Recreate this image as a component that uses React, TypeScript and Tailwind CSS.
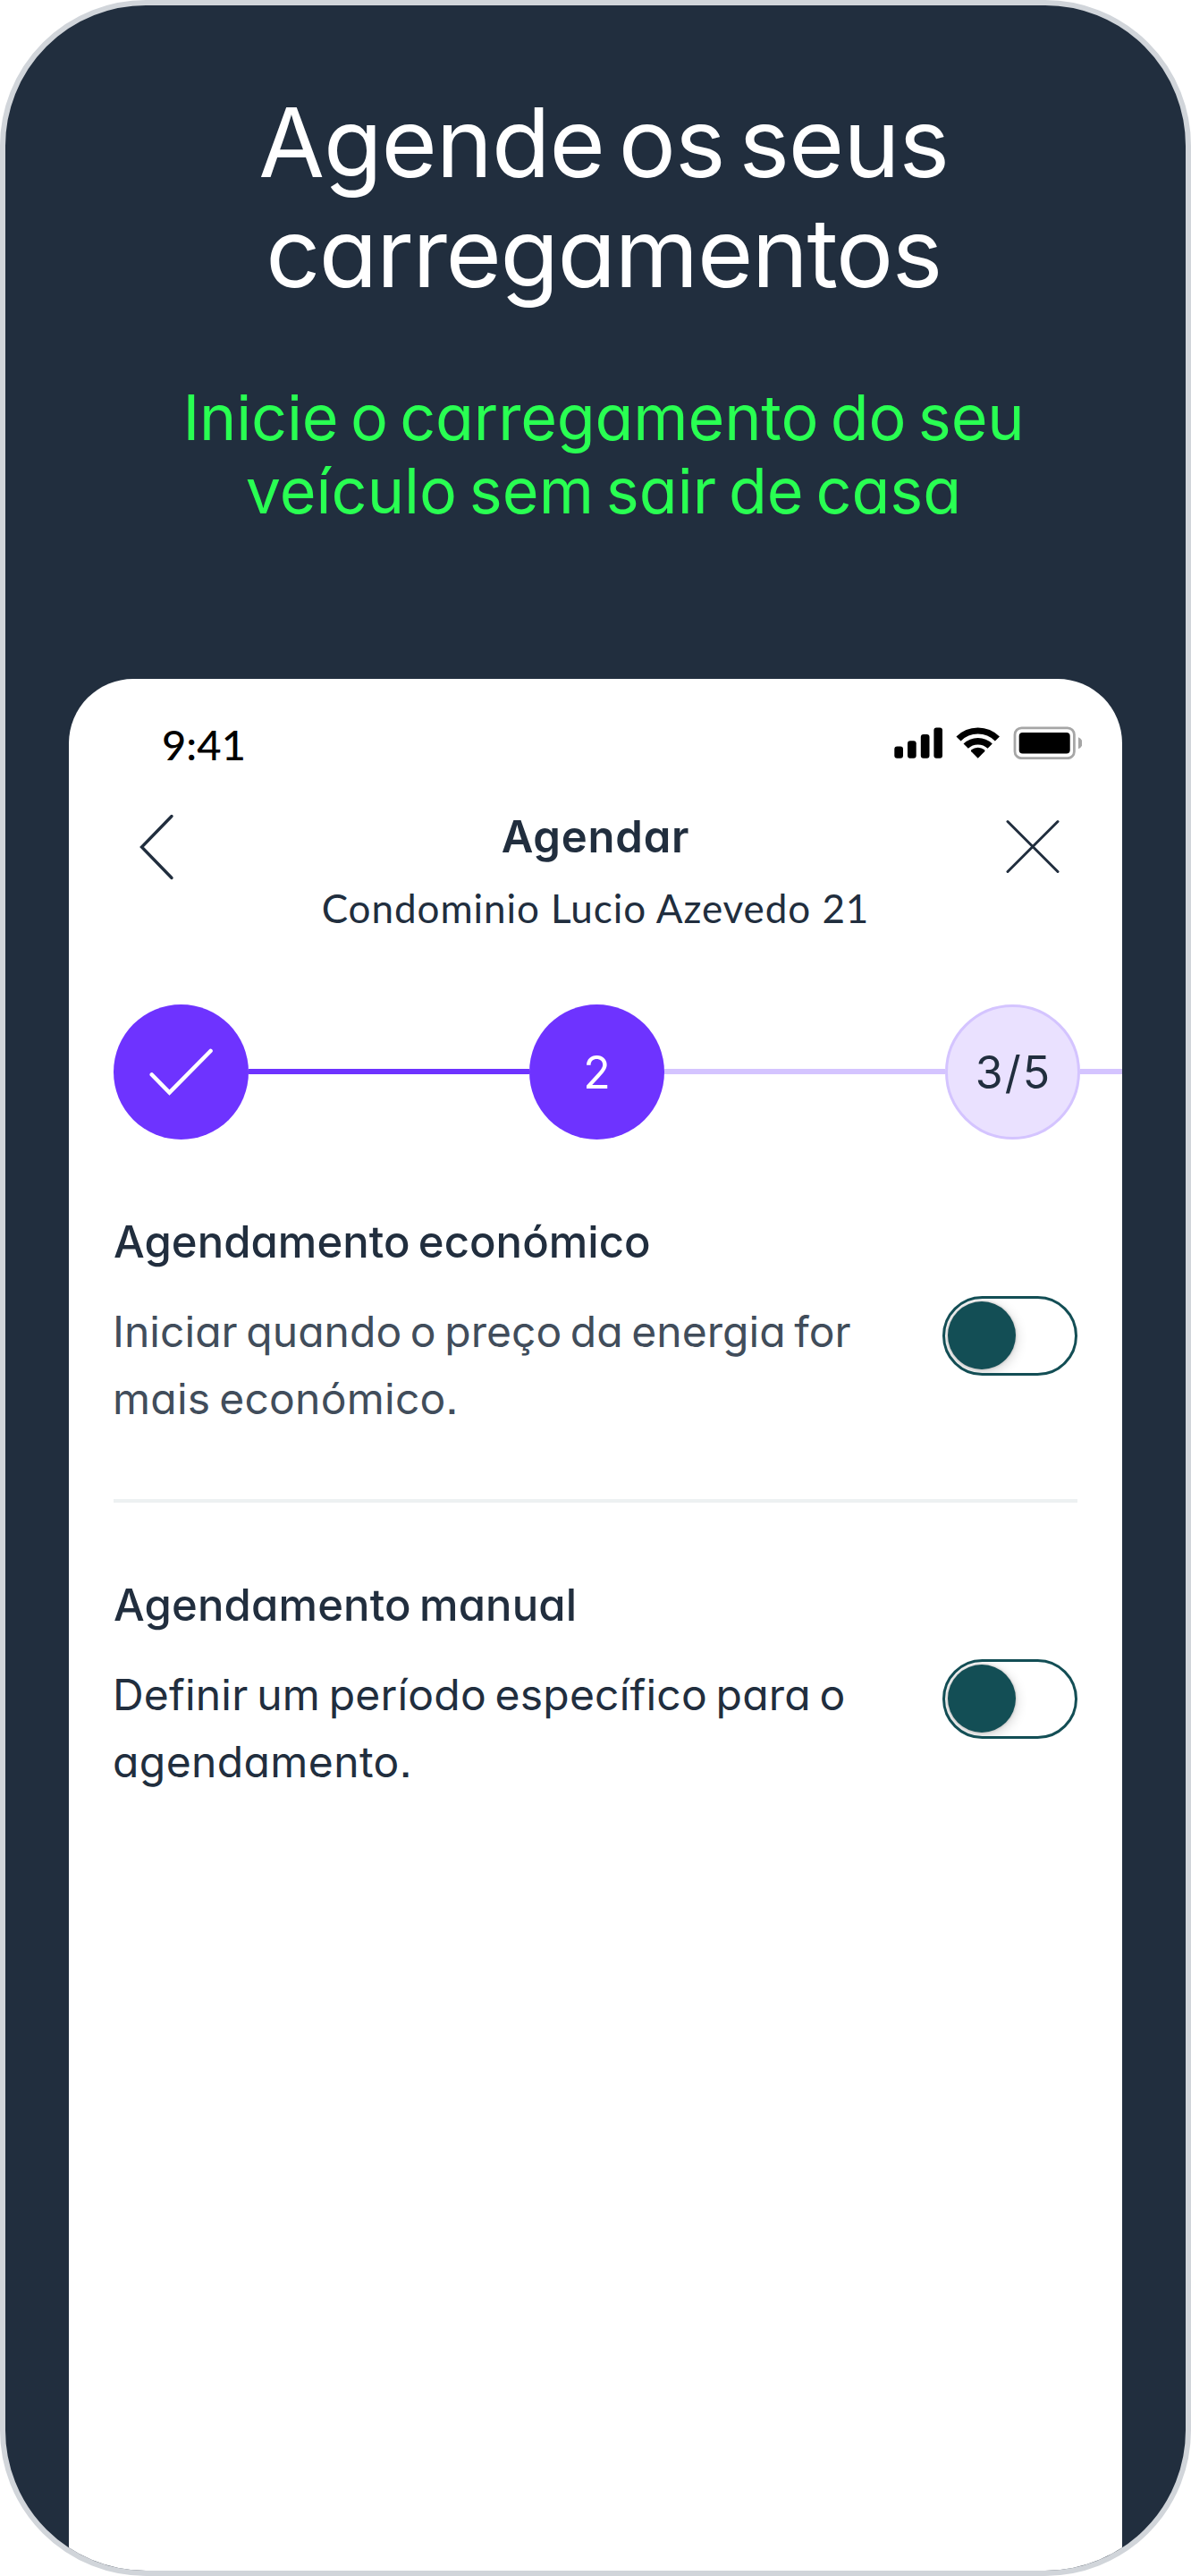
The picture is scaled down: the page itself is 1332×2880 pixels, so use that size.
import { useState } from "react";

const options = [
  {
    id: "economico",
    title: "Agendamento económico",
    titleClass: "tracking-[0.05px]",
    color: "text-[#414d5b]",
    lines: [
      { text: "Iniciar quando o preço da energia for", className: "tracking-[0.05px]" },
      { text: "mais económico.", className: "tracking-[0.25px]" },
    ],
  },
  {
    id: "manual",
    title: "Agendamento manual",
    titleClass: "tracking-[0.15px]",
    color: "text-[#212e3e]",
    lines: [
      { text: "Definir um período específico para o", className: "tracking-[0.2px]" },
      { text: "agendamento.", className: "tracking-[0.4px]" },
    ],
  },
];

function StatusIcons() {
  return (
    <svg width="210" height="37" viewBox="0 0 210 37" fill="none">
      <g fill="#000">
        <rect x="0.3" y="22.5" width="9.7" height="13.2" rx="3" />
        <rect x="15" y="16.2" width="9.7" height="19.5" rx="3" />
        <rect x="29.8" y="9" width="9.7" height="26.7" rx="3" />
        <rect x="44.4" y="1.6" width="9.6" height="34.1" rx="3" />
        <path d="M93.7 35.7 86.3 28.2a1.3 1.3 0 0 1 .1-1.9 11.5 11.5 0 0 1 14.6 0 1.3 1.3 0 0 1 .1 1.9z" />
      </g>
      <path d="M72 14a30.7 30.7 0 0 1 43.4 0" stroke="#000" strokeWidth="7.2" />
      <path d="M80.2 22.2a19.2 19.2 0 0 1 27 0" stroke="#000" strokeWidth="7.5" />
      <rect x="135" y="1.8" width="66.4" height="33.9" rx="7.5" stroke="#a6a6a6" strokeWidth="2.8" />
      <rect x="139.7" y="7" width="57" height="23.4" rx="4" fill="#000" />
      <path d="M206 12.2v13a6.9 6.9 0 0 0 0-13z" fill="#a6a6a6" />
    </svg>
  );
}

function Toggle({ checked, onChange }: { checked: boolean; onChange: () => void }) {
  return (
    <button
      role="switch"
      aria-checked={checked}
      onClick={onChange}
      className={`mt-[90px] flex h-[89px] w-[151px] shrink-0 overflow-hidden rounded-full border-[3.8px] border-[#134e55] p-[3px] ${
        checked ? "justify-end" : "justify-start"
      }`}
    >
      <span className="size-[76px] rounded-full bg-[#134e55] shadow-[0_0_3px_rgba(0,0,0,0.25),0_3px_14px_rgba(0,0,0,0.2)]" />
    </button>
  );
}

export default function App() {
  const [active, setActive] = useState<string | null>(null);

  return (
    <div className="flex h-[2880px] w-[1332px] flex-col overflow-hidden rounded-[163px] border-[6px] border-[#d1d5da] bg-[#212e3e] pt-[92px] font-[Inter,sans-serif] [font-feature-settings:'cv11','ss07']">
      <div className="pl-[18px] text-center whitespace-nowrap">
        <h1 className="text-[107px] leading-[123px] text-white">
          <span className="block tracking-[-1.05px] [word-spacing:-13px]">Agende os seus</span>
          <span className="block tracking-[-1.45px]">carregamentos</span>
        </h1>
        <p className="mt-[82px] text-[70px] leading-[82px] text-[#29ff52] [word-spacing:-6px]">
          <span className="block tracking-[-0.15px]">Inicie o carregamento do seu</span>
          <span className="block tracking-[0.05px]">veículo sem sair de casa</span>
        </p>
      </div>

      <div className="mx-[71px] mt-[168.5px] flex-1 overflow-hidden rounded-t-[72px] bg-white text-[#212e3e]">
        <div className="flex h-[137px] items-center justify-between pt-[7px] pr-[45px] pl-[104px]">
          <span className="pt-1 font-[Lato,sans-serif] text-[47px] leading-none font-medium tracking-[0.1px] text-black">
            9:41
          </span>
          <StatusIcons />
        </div>

        <div className="grid grid-cols-[131px_1fr_131px]">
          <button className="flex items-start pt-[13px] pl-[78px]">
            <svg width="40" height="76" viewBox="0 0 40 76" fill="none" stroke="#212e3e" strokeWidth="3.4" strokeLinecap="round">
              <path d="M37 3.5 3.5 38 37 72.5" />
            </svg>
          </button>
          <div className="text-center whitespace-nowrap">
            <h2 className="text-[49px] leading-[79px] font-semibold tracking-[0.8px]">Agendar</h2>
            <p className="font-[Lato,sans-serif] text-[44px] leading-[81px] tracking-[0.93px]">
              Condominio Lucio Azevedo 21
            </p>
          </div>
          <button className="flex items-start justify-end pt-5 pr-[70px]">
            <svg width="61" height="61" viewBox="0 0 61 61" fill="none" stroke="#212e3e" strokeWidth="3" strokeLinecap="round">
              <path d="m3 2.5 56 56M59 2.5l-56 56" />
            </svg>
          </button>
        </div>

        <div className="mt-[67px] flex items-center pl-[50px] text-[50px]">
          <div className="flex size-[151px] shrink-0 items-center justify-center rounded-full bg-[#6e33ff]">
            <svg width="72" height="60" viewBox="0 0 72 60" fill="none" stroke="#fff" strokeWidth="4.6" strokeLinecap="round">
              <path d="M2.8 33.5 22.5 53.5 68.5 7" />
            </svg>
          </div>
          <div className="h-1.5 w-[314px] shrink-0 bg-[#6e33ff]" />
          <div className="flex size-[151px] shrink-0 items-center justify-center rounded-full bg-[#6e33ff] pt-[2px] text-white">
            2
          </div>
          <div className="h-1.5 w-[314px] shrink-0 bg-[#d4c4ff]" />
          <div className="flex size-[151px] shrink-0 items-center justify-center rounded-full border-[3px] border-[#d4c4ff] bg-[#eae1ff] pt-[2px] pl-[2px] tracking-[2px]">
            3/5
          </div>
          <div className="h-1.5 flex-1 bg-[#d4c4ff]" />
        </div>

        <div className="px-[50px]">
          {options.map((o, i) => (
            <div key={o.id}>
              {i > 0 && <div className="mt-[74px] h-1 bg-[#edf1f2]" />}
              <div className="mt-[85px] flex items-start justify-between">
                <div className="whitespace-nowrap [word-spacing:-4px]">
                  <h3 className={`text-[49px] leading-[60px] font-medium ${o.titleClass}`}>
                    {o.title}
                  </h3>
                  <p className={`mt-8 -ml-px text-[48px] leading-[75.5px] ${o.color}`}>
                    {o.lines.map((l) => (
                      <span key={l.text} className={`block ${l.className}`}>
                        {l.text}
                      </span>
                    ))}
                  </p>
                </div>
                <Toggle
                  checked={active === o.id}
                  onChange={() => setActive(active === o.id ? null : o.id)}
                />
              </div>
            </div>
          ))}
        </div>
      </div>
    </div>
  );
}
